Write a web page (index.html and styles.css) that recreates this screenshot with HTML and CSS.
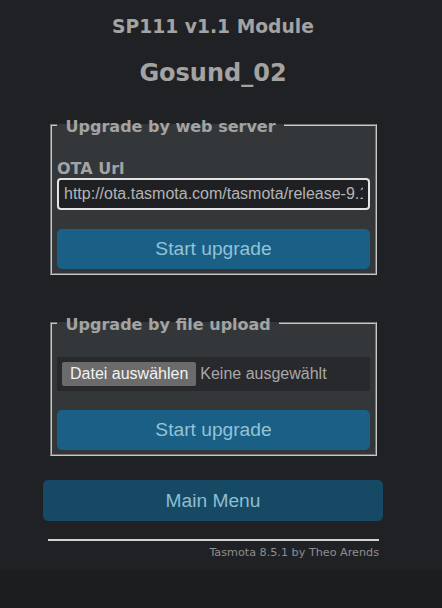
FILE: index.html
```html
<!DOCTYPE html>
<html lang="de">
<head>
<meta charset="utf-8">
<title>Gosund_02 - Firmware upgrade</title>
<link rel="stylesheet" href="styles.css">
</head>
<body>
<div class="page">
  <div class="container">
    <div class="header">
      <h3 class="module">SP111 v1.1 Module</h3>
      <h2 class="devname">Gosund_02</h2>
    </div>

    <fieldset class="group group-web">
      <legend class="legend"><b>&nbsp;Upgrade by web server&nbsp;</b></legend>
      <form class="form">
        <b class="label">OTA Url</b>
        <input class="url" type="text" value="http://ota.tasmota.com/tasmota/release-9.1/tasmota.bin.gz">
        <button class="btn" type="button">Start upgrade</button>
      </form>
    </fieldset>

    <fieldset class="group group-file">
      <legend class="legend"><b>&nbsp;Upgrade by file upload&nbsp;</b></legend>
      <form class="form">
        <div class="file">
          <span class="file-btn">Datei auswählen</span>
          <span class="file-name">Keine ausgewählt</span>
        </div>
        <button class="btn" type="button">Start upgrade</button>
      </form>
    </fieldset>

    <button class="btn btn-main" type="button">Main Menu</button>

    <div class="footer">
      <hr class="rule">
      <span class="credit">Tasmota 8.5.1 by Theo Arends</span>
    </div>
  </div>
</div>
</body>
</html>
```
FILE: styles.css
```css
html {
  background: #1c1d1f;
  margin: 0;
  padding: 0;
}
body {
  margin: 0;
  font-family: "DejaVu Sans", Verdana, sans-serif;
  color: #a3a3a3;
}
.page {
  background: #202124;
  display: flex;
  justify-content: center;
  padding: 0 16px 11px 0;
}
.container {
  width: 340px;
  display: flex;
  flex-direction: column;
}
.header {
  text-align: center;
  padding-top: 16px;
}
.module {
  margin: 0;
  font-size: 18.72px;
  line-height: 22px;
  font-weight: bold;
  color: #a3a3a3;
}
.devname {
  margin: 21px 0 0;
  font-size: 24px;
  line-height: 28px;
  font-weight: bold;
  color: #a3a3a3;
}
.group {
  margin: 26px 6px 0 7px;
  padding: 23px 5px 4px;
  background: #33373a;
  border: 2px groove #c8c8c8;
  min-width: 0;
}
.group-file {
  margin-top: 36px;
}
.legend {
  padding: 4px 3px 0;
  font-size: 16px;
  line-height: 19px;
  color: #a3a3a3;
}
.form {
  display: flex;
  flex-direction: column;
  margin: 0;
}
.label {
  font-size: 16px;
  line-height: 19px;
  color: #a3a3a3;
}
.url {
  box-sizing: border-box;
  width: 100%;
  height: 32px;
  margin: 0;
  padding: 4px 5px;
  border: 2px solid #e4e4e4;
  border-radius: 4px;
  background: #1f2023;
  color: #b4b4b4;
  font-family: "Liberation Sans", Arial, sans-serif;
  font-size: 16px;
  outline: none;
}
.btn {
  display: block;
  width: 100%;
  margin: 19px 0 0;
  padding: 0;
  border: 0;
  border-radius: 5px;
  background: #1a5f86;
  color: #92c3d7;
  font-family: "Liberation Sans", Arial, sans-serif;
  font-size: 19.2px;
  line-height: 40px;
  cursor: pointer;
}
.file {
  display: flex;
  align-items: center;
  height: 34px;
  padding: 0 5px;
  background: #28292c;
  font-family: "Liberation Sans", Arial, sans-serif;
  font-size: 16px;
}
.file-btn {
  background: #6b6b6b;
  color: #f2f2f2;
  padding: 0 8px;
  height: 24px;
  line-height: 24px;
  border-radius: 2px;
}
.file-name {
  margin-left: 4px;
  color: #a8a8a8;
}
.btn-main {
  margin-top: 24px;
  height: 41px;
  line-height: 41px;
  background: #164a64;
  color: #8dbdd0;
}
.footer {
  display: flex;
  flex-direction: column;
  align-items: flex-end;
  padding: 0 4px 0 5px;
}
.rule {
  align-self: stretch;
  margin: 18px 0 0;
  border: 0;
  border-top: 2px solid #d2d2d2;
  height: 0;
}
.credit {
  margin-top: 5px;
  font-size: 11.2px;
  line-height: 13px;
  color: #8e8e8e;
}
```
